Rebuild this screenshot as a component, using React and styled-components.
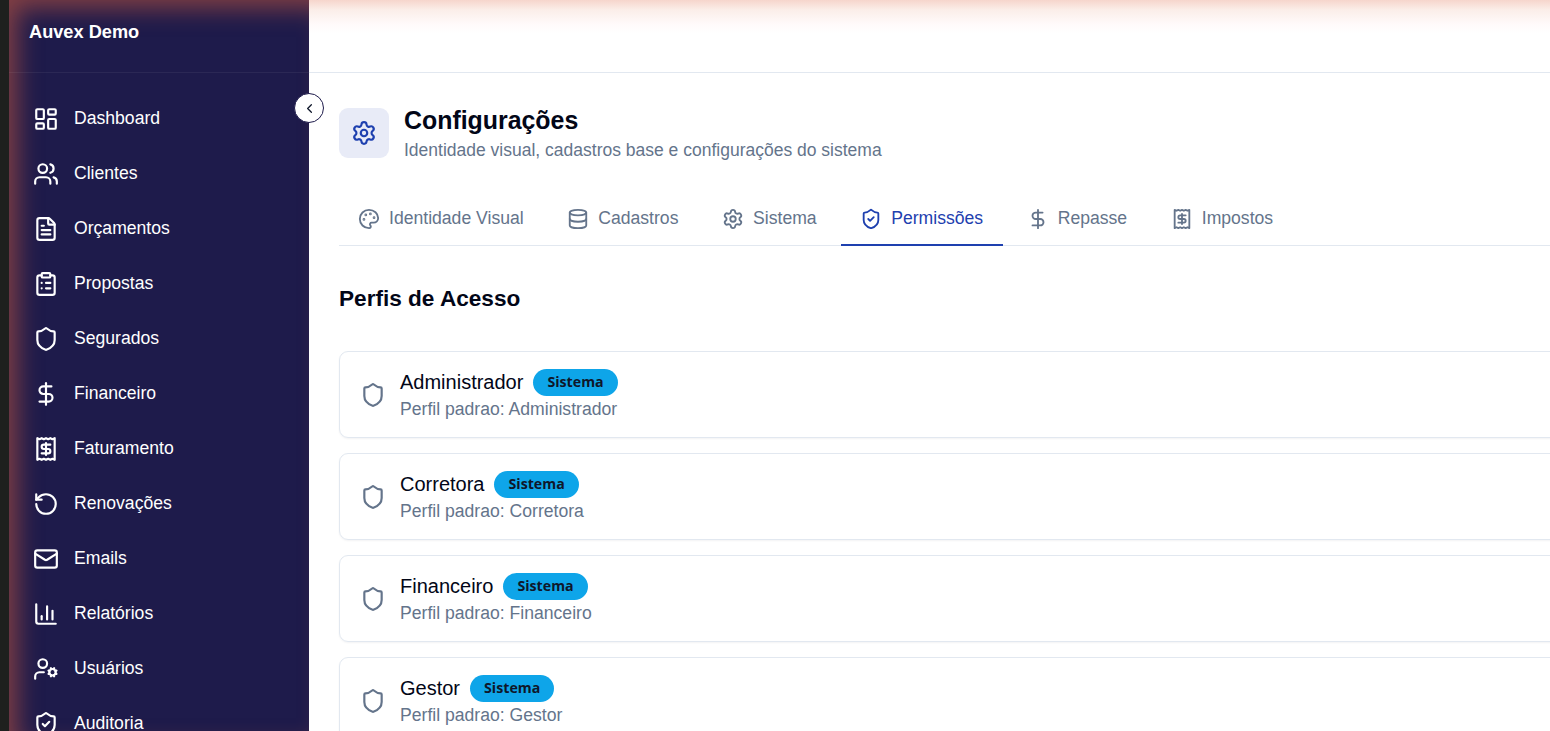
import React from 'react';
import styled, { createGlobalStyle } from 'styled-components';
import {
  LayoutDashboard, Users, FileText, ClipboardList, Shield, DollarSign, Receipt,
  RotateCcw, Mail, ChartColumn, UserCog, ShieldCheck, ChevronLeft, Settings,
  Palette, Database,
} from 'lucide-react';

const GlobalStyle = createGlobalStyle`
  html, body, #root { height: 100%; }
  body {
    margin: 0;
    background: #fff;
    font-family: "Liberation Sans", Arial, sans-serif;
    overflow: hidden;
  }
`;

const Page = styled.div`
  display: flex;
  height: 100vh;
  overflow: hidden;
  background: #1e201e;
  padding-left: 9px;
  box-sizing: border-box;
`;

const Sidebar = styled.aside`
  position: relative;
  flex: 0 0 300px;
  display: flex;
  flex-direction: column;
  background: #1e1b4b;
  box-shadow: inset 12px 12px 24px -4px rgba(232, 100, 60, 0.5);
  color: #fff;
  z-index: 1;
`;

const Brand = styled.div`
  flex: 0 0 73px;
  display: flex;
  align-items: center;
  padding: 0 20px 7px;
  box-sizing: border-box;
  border-bottom: 1px solid rgba(255, 255, 255, 0.06);
  font-size: 18.2px;
  font-weight: 700;
`;

const CollapseButton = styled.button`
  position: absolute;
  top: 93px;
  right: -15px;
  width: 30px;
  height: 30px;
  padding: 0;
  display: flex;
  align-items: center;
  justify-content: center;
  border-radius: 50%;
  border: 1px solid #1e1b4b;
  background: #fff;
  color: #0f172a;
`;

const Nav = styled.nav`
  display: flex;
  flex-direction: column;
  padding: 18px 24px 0;
  overflow: hidden;
`;

const NavItem = styled.a`
  flex: 0 0 55px;
  display: flex;
  align-items: center;
  gap: 15px;
  font-size: 17.6px;
  color: #fff;
`;

const Main = styled.main`
  flex: 1;
  min-width: 0;
  display: flex;
  flex-direction: column;
  background: #fff;
  overflow: hidden;
`;

const TopBar = styled.header`
  flex: 0 0 72px;
  border-bottom: 1px solid #e2e8f0;
  background: linear-gradient(#f6d5cc 0, #fbeee9 10px, #fffafa 24px, #fff 34px);
`;

const Content = styled.div`
  padding: 35px 0 0 30px;
  width: 1300px;
`;

const TitleRow = styled.div`
  display: flex;
  align-items: center;
  gap: 15px;
  height: 50px;
`;

const TitleIcon = styled.div`
  width: 50px;
  height: 50px;
  border-radius: 9px;
  background: #e8ebf7;
  color: #1e40af;
  display: flex;
  align-items: center;
  justify-content: center;
`;

const Title = styled.h1`
  margin: 0;
  font-size: 24.9px;
  line-height: 34px;
  font-weight: 700;
  color: #020617;
`;

const Subtitle = styled.p`
  margin: 0;
  font-size: 17.5px;
  line-height: 26px;
  color: #64748b;
`;

const Tabs = styled.div`
  display: flex;
  gap: 4.6px;
  margin-top: 33px;
  height: 54px;
  border-bottom: 1px solid #e2e8f0;
`;

const Tab = styled.div`
  display: flex;
  align-items: center;
  gap: 9px;
  padding: 2px 20px 0 19px;
  font-size: 17.6px;
  color: ${p => (p.$active ? '#1e40af' : '#64748b')};
  border-bottom: 2px solid ${p => (p.$active ? '#1e40af' : 'transparent')};
  margin-bottom: -1px;
`;

const SectionTitle = styled.h2`
  margin: 39px 0 38px;
  font-size: 22.6px;
  line-height: 28px;
  font-weight: 700;
  color: #020617;
`;

const CardList = styled.div`
  display: flex;
  flex-direction: column;
  gap: 15px;
`;

const Card = styled.div`
  flex: 0 0 87px;
  height: 87px;
  box-sizing: border-box;
  display: flex;
  align-items: center;
  gap: 14px;
  padding: 0 20px;
  border: 1px solid #e2e8f0;
  border-radius: 9px;
  box-shadow: 0 1px 2px rgba(15, 23, 42, 0.05);
  color: #64748b;
`;

const CardBody = styled.div`
  padding-top: 2px;
`;

const CardHead = styled.div`
  display: flex;
  align-items: center;
  gap: 10px;
  height: 27px;
`;

const CardName = styled.span`
  font-size: 20px;
  color: #020617;
`;

const Badge = styled.span`
  display: inline-flex;
  align-items: center;
  height: 27px;
  box-sizing: border-box;
  padding: 0 14px 2px;
  border-radius: 14px;
  background: #0ea5e9;
  color: #0f172a;
  font-family: "Open Sans", sans-serif;
  font-size: 14.2px;
  font-weight: 700;
`;

const CardText = styled.div`
  font-size: 17.6px;
  line-height: 27px;
  color: #64748b;
`;

const navItems = [
  ['Dashboard', LayoutDashboard],
  ['Clientes', Users],
  ['Orçamentos', FileText],
  ['Propostas', ClipboardList],
  ['Segurados', Shield],
  ['Financeiro', DollarSign],
  ['Faturamento', Receipt],
  ['Renovações', RotateCcw],
  ['Emails', Mail],
  ['Relatórios', ChartColumn],
  ['Usuários', UserCog],
  ['Auditoria', ShieldCheck],
];

const tabs = [
  ['Identidade Visual', Palette],
  ['Cadastros', Database],
  ['Sistema', Settings],
  ['Permissões', ShieldCheck],
  ['Repasse', DollarSign],
  ['Impostos', Receipt],
];

const profiles = ['Administrador', 'Corretora', 'Financeiro', 'Gestor'];

export default function App() {
  return (
    <Page>
      <GlobalStyle />
      <Sidebar>
        <Brand>Auvex Demo</Brand>
        <CollapseButton aria-label="Recolher menu">
          <ChevronLeft size={15} />
        </CollapseButton>
        <Nav>
          {navItems.map(([label, Icon]) => (
            <NavItem key={label}>
              <Icon size={26} strokeWidth={2} />
              {label}
            </NavItem>
          ))}
        </Nav>
      </Sidebar>
      <Main>
        <TopBar />
        <Content>
          <TitleRow>
            <TitleIcon>
              <Settings size={26} />
            </TitleIcon>
            <div>
              <Title>Configurações</Title>
              <Subtitle>Identidade visual, cadastros base e configurações do sistema</Subtitle>
            </div>
          </TitleRow>
          <Tabs>
            {tabs.map(([label, Icon]) => (
              <Tab key={label} $active={label === 'Permissões'}>
                <Icon size={22} />
                {label}
              </Tab>
            ))}
          </Tabs>
          <SectionTitle>Perfis de Acesso</SectionTitle>
          <CardList>
            {profiles.map(name => (
              <Card key={name}>
                <Shield size={26} />
                <CardBody>
                  <CardHead>
                    <CardName>{name}</CardName>
                    <Badge>Sistema</Badge>
                  </CardHead>
                  <CardText>Perfil padrao: {name}</CardText>
                </CardBody>
              </Card>
            ))}
          </CardList>
        </Content>
      </Main>
    </Page>
  );
}
